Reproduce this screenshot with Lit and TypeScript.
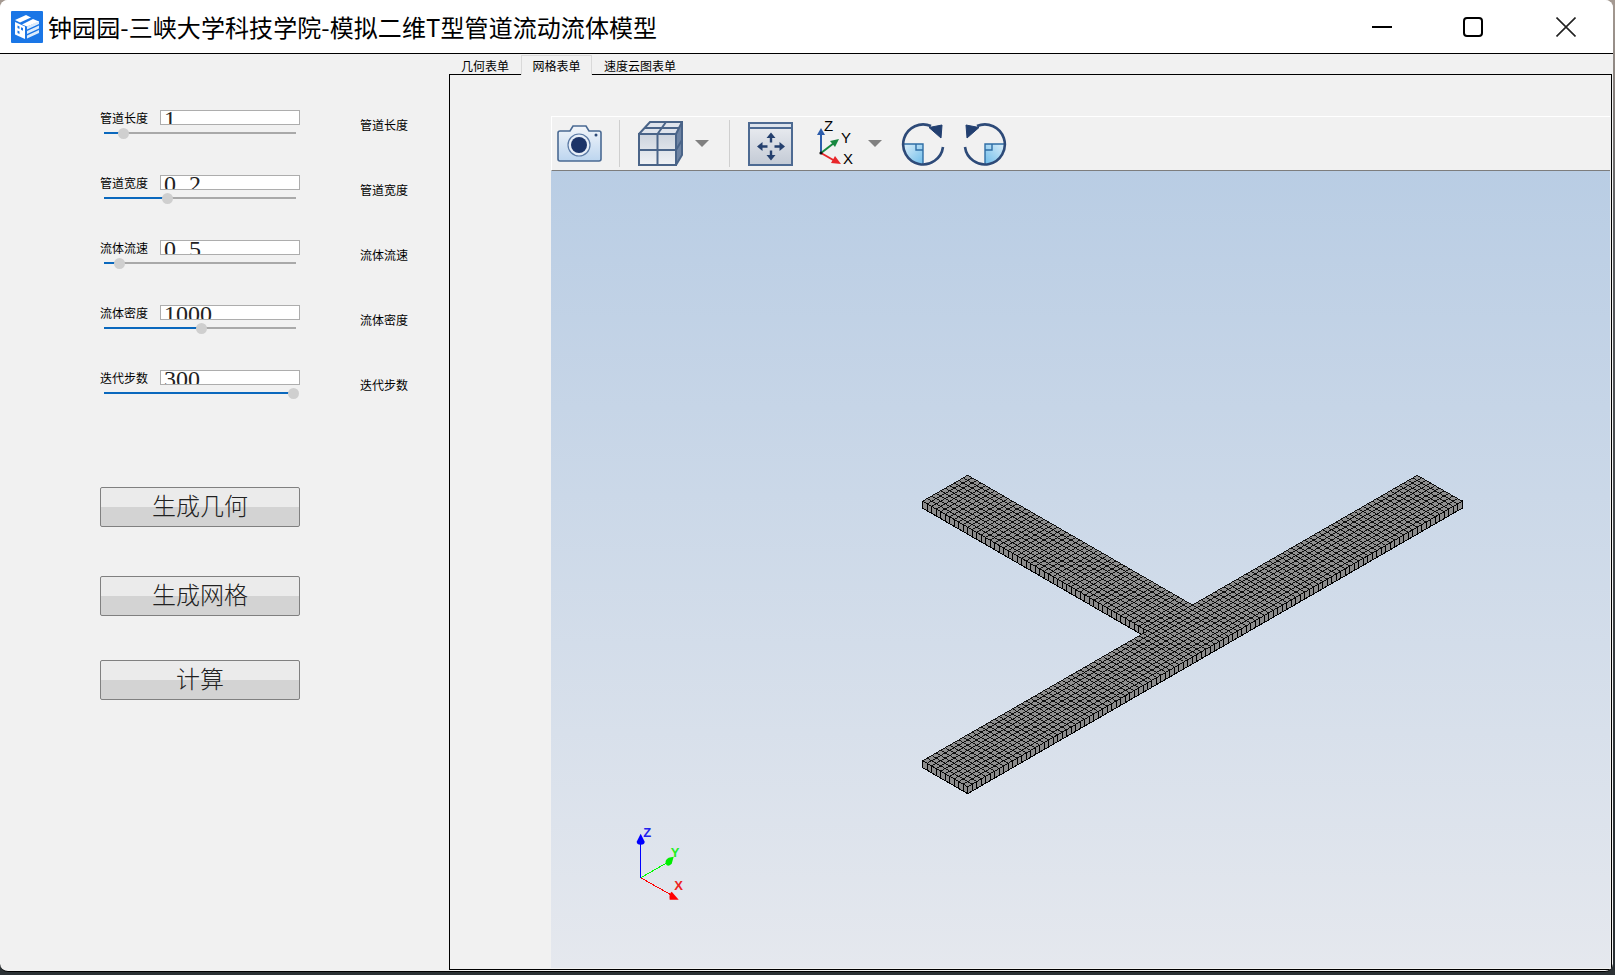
import { LitElement, css, html } from "lit"
import { customElement } from "lit/decorators.js"

const rows = [
  { name: "管道长度", value: "1", left: 19 },
  { name: "管道宽度", value: "0.2", left: 63 },
  { name: "流体流速", value: "0.5", left: 15 },
  { name: "流体密度", value: "1000", left: 97 },
  { name: "迭代步数", value: "300", left: 189 },
]

const tabs = ["几何表单", "网格表单", "速度云图表单"]

// mesh of the T pipe, in cells: u runs along the main bar, v across it
const CELL_X = 4.495
const CELL_Y = 2.595
const WALL = 7
const ORIGIN_X = 922.7 - 551
const ORIGIN_Y = 760.7 - 171

function pt (i: number, j: number) {
  const x = ORIGIN_X + (i + j) * CELL_X
  const y = ORIGIN_Y + (j - i) * CELL_Y
  return [x, y]
}

function line (i1: number, j1: number, i2: number, j2: number) {
  const a = pt(i1, j1)
  const b = pt(i2, j2)
  return `M${a[0].toFixed(1)} ${a[1].toFixed(1)}L${b[0].toFixed(1)} ${b[1].toFixed(1)}`
}

function meshLines () {
  let d = ""
  for (let i = 0; i <= 110; i++) d += line(i, 0, i, 10)
  for (let j = 0; j <= 10; j++) d += line(0, j, 110, j)
  for (let i = 50; i <= 60; i++) d += line(i, -50, i, 0)
  for (let j = -50; j < 0; j++) d += line(50, j, 60, j)
  return d
}

function wallPath (i1: number, j1: number, i2: number, j2: number, n: number) {
  // the strip under one edge, with a tick for each cell
  const a = pt(i1, j1)
  const b = pt(i2, j2)
  let d = `M${a[0]} ${a[1]}L${b[0]} ${b[1]}L${b[0]} ${b[1] + WALL}L${a[0]} ${a[1] + WALL}Z`
  for (let k = 1; k < n; k++) {
    const x = a[0] + ((b[0] - a[0]) * k) / n
    const y = a[1] + ((b[1] - a[1]) * k) / n
    d += `M${x.toFixed(1)} ${y.toFixed(1)}V${(y + WALL).toFixed(1)}`
  }
  return d
}

function outline () {
  const p = [[0, 0], [50, 0], [50, -50], [60, -50], [60, 0], [110, 0], [110, 10], [0, 10]]
  return p.map(([i, j]) => pt(i, j).map((n) => n.toFixed(1)).join(",")).join(" ")
}

const rotateIcon = (mirror: boolean) => html`
  <svg class="rot" viewBox="0 0 46 46">
    <defs>
      <linearGradient id="rq" x1="0" y1="0" x2="1" y2="1">
        <stop offset="0" stop-color="#dceffa"></stop>
        <stop offset="1" stop-color="#6fbdea"></stop>
      </linearGradient>
    </defs>
    <g transform=${mirror ? "translate(46 0) scale(-1 1)" : ""}>
      <path d="M3 23H23V43A20 20 0 0 1 3 23Z" fill="url(#rq)"></path>
      <path d="M3 23H23V43M16 23V29H23" fill="none" stroke="#2f6ea5" stroke-width="1.4"></path>
      <path d="M43 26A20 20 0 1 1 31 5" fill="none" stroke="#2d4a78" stroke-width="2.6"></path>
      <path d="M29 6.5L42 4L41 17Z" fill="#223f70" stroke="#223f70" stroke-width="1"></path>
    </g>
  </svg>
`

@customElement("app-root")
export class AppRoot extends LitElement {
  static styles = css`
    :host {
      display: block;
      width: 1615px;
      height: 975px;
      overflow: hidden;
      background: linear-gradient(#a59a92 0, #5d5f62 220px, #2b3134 800px);
      font-family: "Noto Sans CJK SC", "Liberation Sans", sans-serif;
      color: #000;
    }
    .window {
      width: 1613px;
      height: 972px;
      box-sizing: border-box;
      border-bottom: 1px solid #000;
      border-radius: 8px;
      overflow: hidden;
      background: #f1f1f1;
      display: flex;
      flex-direction: column;
    }
    .titlebar {
      height: 53px;
      flex: none;
      box-sizing: content-box;
      background: #fff;
      border-bottom: 1px solid #000;
      display: flex;
      align-items: center;
      padding-left: 11px;
    }
    .logo {
      width: 32px;
      height: 32px;
      flex: none;
    }
    .title {
      margin-left: 5px;
      font-size: 24px;
      letter-spacing: 0.08px;
      line-height: 32px;
      white-space: nowrap;
      flex: 1;
    }
    .winbtn {
      width: 20px;
      height: 20px;
      flex: none;
      display: block;
    }
    .min {
      margin-right: 71px;
    }
    .max {
      margin-right: 73px;
    }
    .close {
      margin-right: 37px;
    }
    .main {
      flex: 1;
      min-height: 0;
      display: flex;
    }
    .form {
      width: 449px;
      flex: none;
      box-sizing: border-box;
      padding: 56px 0 0 100px;
    }
    .row {
      height: 65px;
      display: flex;
      align-items: flex-start;
    }
    .controls {
      width: 200px;
      flex: none;
    }
    .inline {
      display: flex;
      height: 15px;
      align-items: center;
    }
    .label {
      font-size: 12px;
      line-height: 15px;
      white-space: nowrap;
    }
    .field {
      margin-left: 12px;
      width: 140px;
      height: 15px;
      box-sizing: border-box;
      border: 1px solid #adadad;
      background: #fff;
      overflow: hidden;
      padding-left: 3px;
      font-family: "Liberation Serif", serif;
      font-size: 24px;
      line-height: 16px;
      color: #222;
    }
    .dot {
      letter-spacing: 7px;
    }
    .slider {
      position: relative;
      margin: 7px 0 0 4px;
      width: 192px;
      height: 2px;
      background: #a9a9a9;
    }
    .fill {
      height: 2px;
      background: #0a68bd;
    }
    .handle {
      position: absolute;
      top: -4.5px;
      width: 11px;
      height: 11px;
      margin-left: -5.5px;
      border-radius: 50%;
      background: #cfcfcf;
    }
    .side {
      margin-left: 60px;
      margin-top: 7px;
    }
    .btn {
      display: block;
      width: 200px;
      height: 40px;
      box-sizing: border-box;
      padding: 0 0 4px;
      border: 1px solid #808080;
      border-radius: 2px;
      background: linear-gradient(#ebebeb 0, #ebebeb 50%, #d3d3d3 50%, #d3d3d3 100%);
      font-family: "Noto Sans CJK SC", "Liberation Sans", sans-serif;
      font-size: 24px;
      font-weight: 300;
      line-height: 34px;
      color: #222;
    }
    .btn-first {
      margin-top: 52px;
    }
    .btn-second {
      margin-top: 49px;
    }
    .btn-third {
      margin-top: 44px;
    }
    .tabarea {
      flex: 1;
      min-width: 0;
      display: flex;
      flex-direction: column;
      padding: 0 1px 1px 0;
    }
    .tabs {
      display: flex;
      height: 20px;
      flex: none;
    }
    .tab {
      position: relative;
      z-index: 1;
      height: 19px;
      margin-top: 1px;
      padding: 0 12px;
      box-sizing: border-box;
      font-size: 12px;
      line-height: 21px;
      white-space: nowrap;
    }
    .tab.on {
      height: 20px;
      margin-bottom: -1px;
      line-height: 20px;
      padding: 0 10.5px;
      border: 1px solid #d9d9d9;
      border-bottom: none;
      background: #f1f1f1;
    }
    .pane {
      flex: 1;
      min-height: 0;
      border: 1px solid #000;
      padding: 41px 1px 1px 101px;
      display: flex;
      flex-direction: column;
    }
    .toolbar {
      height: 53px;
      flex: none;
      display: flex;
      align-items: center;
      border-top: 1px solid #fff;
      border-left: 1px solid #fff;
      border-bottom: 1px solid #7d7d7d;
    }
    .toolbar svg {
      display: block;
      flex: none;
    }
    .sep {
      width: 1px;
      height: 47px;
      flex: none;
      background: #cfcfcf;
    }
    .caret {
      width: 0;
      height: 0;
      flex: none;
      border-left: 7px solid transparent;
      border-right: 7px solid transparent;
      border-top: 7px solid #808080;
    }
    .cam {
      width: 45px;
      height: 37px;
      margin-left: 5px;
    }
    .sep1 {
      margin-left: 17px;
    }
    .cube {
      width: 45px;
      height: 45px;
      margin-left: 18px;
    }
    .caret1 {
      margin-left: 12px;
    }
    .sep2 {
      margin-left: 20px;
    }
    .fit {
      width: 45px;
      height: 44px;
      margin-left: 18px;
    }
    .axes {
      width: 45px;
      height: 48px;
      margin-left: 22px;
    }
    .caret2 {
      margin-left: 8px;
    }
    .rot {
      width: 46px;
      height: 46px;
      margin-left: 18px;
    }
    .rot + .rot {
      margin-left: 16px;
    }
    .viewport {
      flex: 1;
      min-height: 0;
      background: linear-gradient(#b9cde4, #e5e8ee);
    }
    .viewport svg {
      display: block;
      width: 100%;
      height: 100%;
    }
    .gizmo-text {
      font-family: "Liberation Sans", sans-serif;
      font-size: 13px;
      font-weight: 700;
    }
    .axis-text {
      font-family: "Liberation Sans", sans-serif;
      font-size: 15px;
    }
  `

  renderField (value: string) {
    const parts = value.split(".")
    if (parts.length < 2) return value
    return html`${parts[0]}<span class="dot">.</span>${parts[1]}`
  }

  renderRow (row: { name: string; value: string; left: number }) {
    return html`
      <div class="row">
        <div class="controls">
          <div class="inline">
            <span class="label">${row.name}</span>
            <div class="field">${this.renderField(row.value)}</div>
          </div>
          <div class="slider">
            <div class="fill" style="width:${row.left}px"></div>
            <div class="handle" style="left:${row.left}px"></div>
          </div>
        </div>
        <span class="label side">${row.name}</span>
      </div>
    `
  }

  renderLogo () {
    return html`
      <svg class="logo" viewBox="0 0 32 32">
        <rect width="32" height="32" rx="1" fill="#1a76e6"></rect>
        <path d="M4 9L15 4L20 6.5L9 11.5Z" fill="#fff"></path>
        <path d="M4 11L14 15.5V28L4 23.5Z" fill="#fff"></path>
        <path d="M6.5 14.5L8.5 15.4V18L6.5 17.1ZM10 16.2L12 17.1V19.7L10 18.8ZM6.5 19.5L8.5 20.4V23L6.5 22.1Z" fill="#1a76e6"></path>
        <path d="M16 15.5L28 10V13L16 18.5ZM16 20L28 14.5V17.5L16 23ZM16 24.5L28 19V22L16 27.5Z" fill="#dcebfb"></path>
        <path d="M22 8L28 10.5L16 15.5L11 13.5Z" fill="#fff"></path>
      </svg>
    `
  }

  renderToolbar () {
    return html`
      <div class="toolbar">
        <svg class="cam" viewBox="0 0 45 37">
          <defs>
            <linearGradient id="camg" x1="0" y1="0" x2="0" y2="1">
              <stop offset="0" stop-color="#f3f6fa"></stop>
              <stop offset="1" stop-color="#bcd5ef"></stop>
            </linearGradient>
          </defs>
          <path d="M3 6H13L16 1H29L32 6H42Q44 6 44 8V34Q44 36 42 36H3Q1 36 1 34V8Q1 6 3 6Z" fill="url(#camg)" stroke="#4a6a93" stroke-width="1.6"></path>
          <circle cx="22" cy="20" r="11" fill="#e8eff8" stroke="#5b7aa5" stroke-width="1.2"></circle>
          <circle cx="22" cy="20" r="8" fill="#1c3468"></circle>
          <circle cx="39" cy="10" r="1.5" fill="#2d4a78"></circle>
        </svg>
        <div class="sep sep1"></div>
        <svg class="cube" viewBox="0 0 45 45">
          <defs>
            <linearGradient id="cubeg" x1="0" y1="0" x2="0" y2="1">
              <stop offset="0" stop-color="#ccd3dd"></stop>
              <stop offset="1" stop-color="#f0f2f5"></stop>
            </linearGradient>
          </defs>
          <path d="M1 13H38V44H1Z" fill="url(#cubeg)"></path>
          <path d="M1 13L12 1H44L38 13Z" fill="#dfe4ec"></path>
          <path d="M38 13L44 1V34L38 44Z" fill="#6d83a3"></path>
          <path d="M1 13H38V44H1ZM1 13L12 1H44L38 13M44 1V34L38 44M19.5 13V44M1 29H38M19.5 13L28 1M6 7H41M38 29L44 19" fill="none" stroke="#4a6488" stroke-width="2"></path>
        </svg>
        <div class="caret caret1"></div>
        <div class="sep sep2"></div>
        <svg class="fit" viewBox="0 0 45 44">
          <defs>
            <linearGradient id="fitg" x1="0" y1="0" x2="0" y2="1">
              <stop offset="0" stop-color="#eceef2"></stop>
              <stop offset="1" stop-color="#c3cad5"></stop>
            </linearGradient>
          </defs>
          <rect x="1" y="1" width="43" height="42" fill="url(#fitg)" stroke="#4d6a92" stroke-width="2"></rect>
          <path d="M1 6H44" stroke="#4d6a92" stroke-width="2"></path>
          <rect x="2" y="2" width="41" height="3" fill="#dde3ec"></rect>
          <path d="M23 15V20.5M23 28.5V34M14 24.5H19.5M26.5 24.5H32" stroke="#25406e" stroke-width="2.4"></path>
          <path d="M23 10.5L27.5 16H18.5ZM23 38.5L27.5 33H18.5ZM9 24.5L14.5 20V29ZM37 24.5L31.5 20V29Z" fill="#25406e"></path>
        </svg>
        <svg class="axes" viewBox="0 0 45 48">
          <path d="M6 33V13" stroke="#2c5cab" stroke-width="2"></path>
          <path d="M6 8L10 15H2Z" fill="#2c5cab"></path>
          <path d="M6 33L19 23" stroke="#17883f" stroke-width="2"></path>
          <path d="M24 19L20 27L15 21Z" fill="#17883f"></path>
          <path d="M6 33L20 41" stroke="#e8262a" stroke-width="2"></path>
          <path d="M26 44L16 43L20 36Z" fill="#e8262a"></path>
          <circle cx="6" cy="33" r="1.6" fill="#111"></circle>
          <text class="axis-text" x="9" y="11">Z</text>
          <text class="axis-text" x="26" y="23">Y</text>
          <text class="axis-text" x="28" y="44">X</text>
        </svg>
        <div class="caret caret2"></div>
        ${rotateIcon(false)}
        ${rotateIcon(true)}
      </div>
    `
  }

  renderViewport () {
    const ox = 640.7 - 551
    const oy = 877.7 - 171
    return html`
      <div class="viewport">
        <svg>
          <g shape-rendering="crispEdges" stroke="#000" stroke-width="1">
            <path fill="#8c8c8c" d=${wallPath(0, 0, 0, 10, 10)}></path>
            <path fill="#8c8c8c" d=${wallPath(0, 10, 110, 10, 110)}></path>
            <path fill="#8c8c8c" d=${wallPath(50, -50, 50, 0, 50)}></path>
            <polygon fill="#8f8f8f" stroke="none" points=${outline()}></polygon>
            <path fill="none" stroke-width="0.9" d=${meshLines()}></path>
          </g>
          <g shape-rendering="crispEdges">
            <path d="M${ox} ${oy}V${oy - 34}" stroke="#0000ff" stroke-width="1"></path>
            <path d="M${ox} ${oy}L${ox + 28} ${oy - 16}" stroke="#00ff00" stroke-width="1"></path>
            <path d="M${ox} ${oy}L${ox + 30} ${oy + 17}" stroke="#ff0000" stroke-width="1"></path>
          </g>
          <path d="M${ox} ${oy - 44}L${ox + 4} ${oy - 36}Q${ox + 4} ${oy - 33} ${ox} ${oy - 33}Q${ox - 4} ${oy - 33} ${ox - 4} ${oy - 36}Z" fill="#0000ff"></path>
          <path d="M${ox + 33} ${oy - 21}L${ox + 31} ${oy - 14}Q${ox + 27} ${oy - 10} ${ox + 25} ${oy - 14}Q${ox + 24} ${oy - 18} ${ox + 28} ${oy - 20}Z" fill="#00ee00"></path>
          <path d="M${ox + 38} ${oy + 22}H${ox + 29}Q${ox + 28} ${oy + 16} ${ox + 31} ${oy + 14}Z" fill="#ff0000"></path>
          <text class="gizmo-text" x=${ox + 2.5} y=${oy - 40.7} fill="#2222ee">Z</text>
          <text class="gizmo-text" x=${ox + 30} y=${oy - 20.4} fill="#22ee22">Y</text>
          <text class="gizmo-text" x=${ox + 33.5} y=${oy + 12.3} fill="#ee2222">X</text>
        </svg>
      </div>
    `
  }

  render () {
    return html`
      <div class="window">
        <div class="titlebar">
          ${this.renderLogo()}
          <div class="title">钟园园-三峡大学科技学院-模拟二维T型管道流动流体模型</div>
          <svg class="winbtn min" viewBox="0 0 20 20"><path d="M0 10H20" stroke="#000" stroke-width="2"></path></svg>
          <svg class="winbtn max" viewBox="0 0 20 20"><rect x="1" y="1" width="18" height="18" rx="3" fill="none" stroke="#000" stroke-width="2"></rect></svg>
          <svg class="winbtn close" viewBox="0 0 20 20"><path d="M0.5 0.5L19.5 19.5M19.5 0.5L0.5 19.5" stroke="#222" stroke-width="1.6"></path></svg>
        </div>
        <div class="main">
          <div class="form">
            ${rows.map((r) => this.renderRow(r))}
            <button class="btn btn-first">生成几何</button>
            <button class="btn btn-second">生成网格</button>
            <button class="btn btn-third">计算</button>
          </div>
          <div class="tabarea">
            <div class="tabs">
              ${tabs.map((t, i) => html`<div class="tab ${i === 1 ? "on" : ""}">${t}</div>`)}
            </div>
            <div class="pane">
              ${this.renderToolbar()}
              ${this.renderViewport()}
            </div>
          </div>
        </div>
      </div>
    `
  }
}
